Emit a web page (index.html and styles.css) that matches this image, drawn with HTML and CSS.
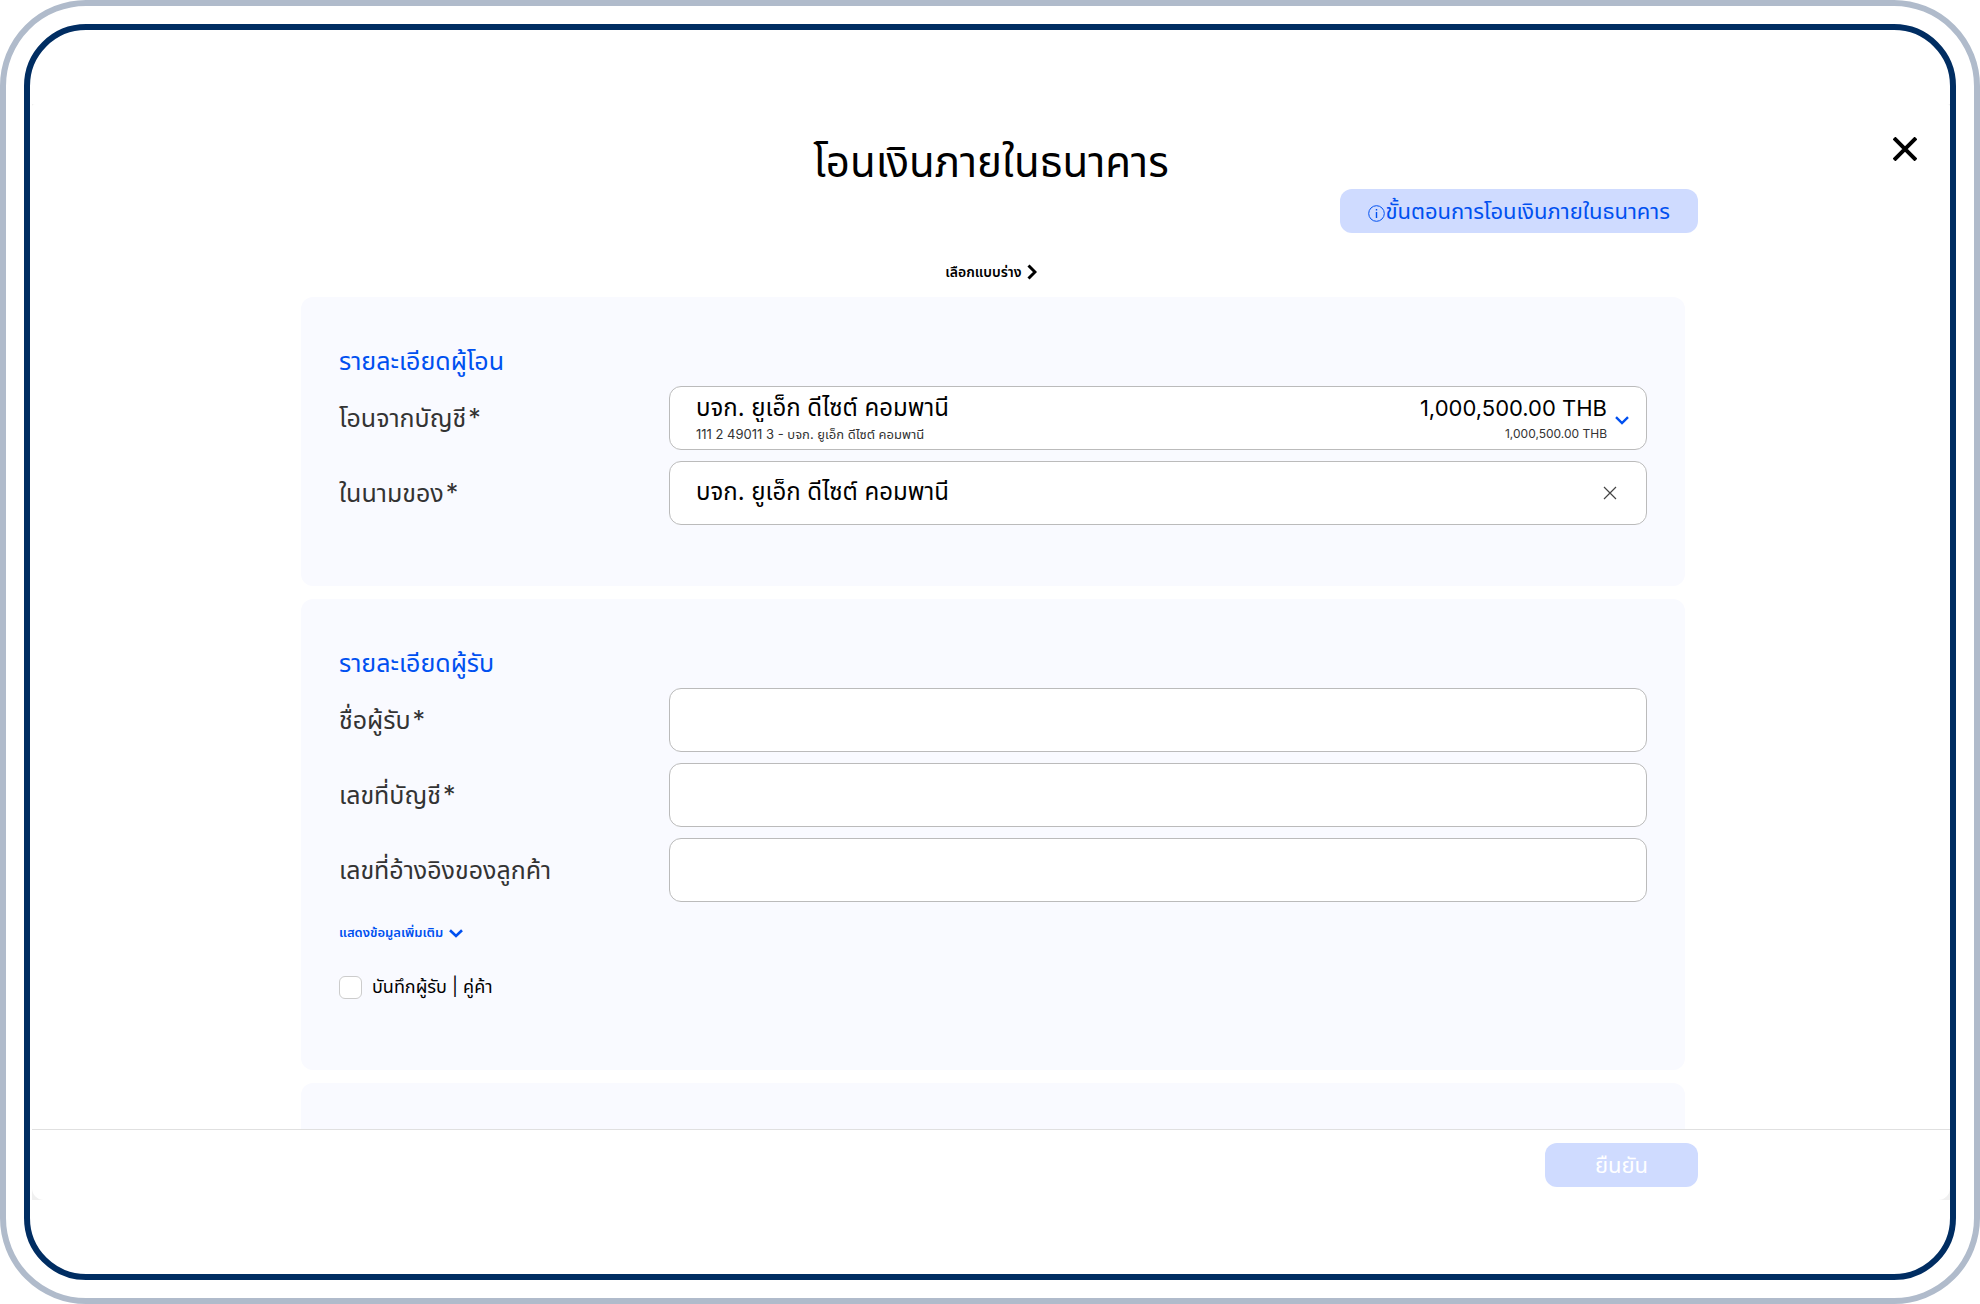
FILE: index.html
```html
<!DOCTYPE html>
<html lang="th">
  <head>
    <meta charset="utf-8">
    <title>โอนเงินภายในธนาคาร</title>
    <link rel="stylesheet" href="styles.css">
  </head>
  <body>
    <div class="frame">
      <div class="screen">
        <div class="backdrop">
          <form class="modal">
            <div class="modal-body">
              <button type="button" class="close-button" aria-label="ปิด">
                <svg width="24" height="24" viewBox="0 0 24 24"><path d="M1 1L23 23M23 1L1 23" stroke="#000" stroke-width="4"/></svg>
              </button>
              <div class="container">
                <h1 class="title">โอนเงินภายในธนาคาร</h1>
                <div class="help">
                  <button type="button" class="button help-button">
                    <svg class="info" width="17" height="17" viewBox="0 0 17 17" fill="none" stroke="#0050f0"><circle cx="8.5" cy="8.5" r="7.8"/><path d="M8.5 7V13M8.5 4V5.6" stroke-width="1.4"/></svg>ขั้นตอนการโอนเงินภายในธนาคาร
                  </button>
                </div>
                <a class="draft" href="#">เลือกแบบร่าง
                  <svg width="10" height="16" viewBox="0 0 10 16" fill="none" stroke="#000" stroke-width="3"><path d="M1.5 1.5L8 8L1.5 14.5"/></svg>
                </a>

                <section class="card">
                  <h2>รายละเอียดผู้โอน</h2>
                  <div class="row">
                    <label for="from">โอนจากบัญชี<span class="required">*</span></label>
                    <div class="field account">
                      <div class="account-name">
                        <select id="from"><option>บจก. ยูเอ็ก ดีไซต์ คอมพานี</option></select>
                        <small>111 2 49011 3 - บจก. ยูเอ็ก ดีไซต์ คอมพานี</small>
                      </div>
                      <div class="account-balance">
                        <span>1,000,500.00 THB</span>
                        <small>1,000,500.00 THB</small>
                      </div>
                      <svg class="arrow" width="14" height="9" viewBox="0 0 14 9" fill="none" stroke="#0050f0" stroke-width="2.4"><path d="M1 1.2L7 7L13 1.2"/></svg>
                    </div>
                  </div>
                  <div class="row">
                    <label for="name">ในนามของ<span class="required">*</span></label>
                    <div class="field">
                      <input type="text" id="name" value="บจก. ยูเอ็ก ดีไซต์ คอมพานี">
                      <button type="button" class="clear-button" aria-label="ล้าง">
                        <svg width="14" height="14" viewBox="0 0 14 14"><path d="M1 1L13 13M13 1L1 13" stroke="#444" stroke-width="1.2"/></svg>
                      </button>
                    </div>
                  </div>
                </section>

                <section class="card">
                  <h2>รายละเอียดผู้รับ</h2>
                  <div class="row">
                    <label for="receiver">ชื่อผู้รับ<span class="required">*</span></label>
                    <div class="field"><input type="text" id="receiver"></div>
                  </div>
                  <div class="row">
                    <label for="account">เลขที่บัญชี<span class="required">*</span></label>
                    <div class="field"><input type="text" id="account"></div>
                  </div>
                  <div class="row">
                    <label for="reference">เลขที่อ้างอิงของลูกค้า</label>
                    <div class="field"><input type="text" id="reference"></div>
                  </div>
                  <a class="more" href="#">แสดงข้อมูลเพิ่มเติม
                    <svg width="14" height="9" viewBox="0 0 14 9" fill="none" stroke="#0050f0" stroke-width="2.6"><path d="M1 1.2L7 7L13 1.2"/></svg>
                  </a>
                  <div class="save">
                    <input type="checkbox" id="save">
                    <label for="save">บันทึกผู้รับ | คู่ค้า</label>
                  </div>
                </section>

                <section class="card"></section>
              </div>
            </div>
            <div class="modal-footer">
              <div class="container">
                <button type="submit" class="button submit-button" disabled>ยืนยัน</button>
              </div>
            </div>
          </form>
        </div>
      </div>
    </div>
  </body>
</html>
```
FILE: styles.css
```css
* {
  box-sizing: border-box;
}
body {
  margin: 0;
  background-color: white;
  color: black;
  font-family: Inter, "Noto Sans Thai", sans-serif;
  font-size: 22px;
}
button, input, select {
  font: inherit;
  color: inherit;
}
button {
  border: none;
  background: none;
  padding: 0;
}
a {
  text-decoration: none;
}
.frame {
  height: 100vh;
  padding: 18px;
  border: 6px solid #b0bbcb;
  border-radius: 86px;
}
.screen {
  height: 100%;
  padding: 74px 0;
  border: 6px solid #002d62;
  border-radius: 62px;
}
.backdrop {
  height: 100%;
  padding-left: 2px;
  background-color: #f0f0f0;
  background-clip: content-box;
}
.modal {
  display: flex;
  flex-direction: column;
  height: 100%;
  background-color: white;
  border-radius: 3px 3px 12px 12px;
}
.modal-body {
  position: relative;
  flex: 1;
  min-height: 0;
  overflow: hidden;
  padding-top: 30px;
}
.container {
  width: 74%;
  max-width: 1414px;
  margin: 0 auto;
}
.close-button {
  position: absolute;
  top: 33px;
  right: 33px;
  line-height: 0;
}
.title {
  margin: 0;
  font-size: 42px;
  font-weight: 400;
  line-height: 56px;
  text-align: center;
}
.button {
  height: 44px;
  border-radius: 12px;
  background-color: #cfdbff;
  color: #0050f0;
  line-height: 44px;
}
.help {
  height: 44px;
  margin-top: -1px;
  text-align: right;
}
.help-button {
  padding: 0 28px;
}
.info {
  vertical-align: -3px;
}
.draft {
  display: flex;
  align-items: center;
  justify-content: center;
  gap: 5px;
  height: 24px;
  margin: 27px 0 13px;
  color: black;
  font-size: 14px;
  font-weight: 600;
}
.card {
  min-height: 200px;
  margin: 0 13px 13px 17px;
  padding: 48px 38px 61px;
  background-color: #f9faff;
  border-radius: 12px;
}
.card h2 {
  margin: 0 0 9px;
  color: #0050f0;
  font-size: 25px;
  font-weight: 400;
  line-height: 32px;
}
.row {
  display: flex;
  align-items: center;
  margin-bottom: 11px;
}
.row:last-child {
  margin-bottom: 0;
}
.row label {
  width: 330px;
  padding-top: 2px;
  color: #333;
  font-size: 25px;
}
.required {
  margin-left: 2px;
}
.field {
  display: flex;
  flex: 1;
  align-items: center;
  height: 64px;
  padding: 0 26px;
  background-color: white;
  border: 1px solid #bbb;
  border-radius: 12px;
}
.field input {
  flex: 1;
  min-width: 0;
  padding: 0;
  border: none;
  background: none;
  outline: none;
  font-size: 24px;
}
.clear-button {
  padding: 3px;
  line-height: 0;
}
.account {
  padding-top: 4px;
  padding-right: 17px;
}
.account-name {
  flex: 1;
}
.account-name select {
  display: block;
  height: 28px;
  padding: 0;
  border: none;
  background: none;
  appearance: none;
  font-size: 24px;
  line-height: 28px;
}
.account-balance {
  text-align: right;
}
.account-balance span {
  display: block;
  line-height: 28px;
}
.account small {
  display: block;
  color: #333;
  font-size: 13px;
  line-height: 24px;
}
.account-balance small {
  font-size: 12px;
}
.arrow {
  margin-left: 8px;
}
.more {
  display: flex;
  align-items: center;
  gap: 6px;
  height: 30px;
  margin: 16px 0 17px;
  color: #0050f0;
  font-size: 13px;
  font-weight: 600;
}
.save {
  display: flex;
  align-items: center;
  gap: 10px;
  height: 44px;
  font-size: 18px;
}
.save input {
  width: 23px;
  height: 23px;
  margin: 0;
  appearance: none;
  background-color: white;
  border: 1px solid #ccc;
  border-radius: 6px;
}
.modal-footer {
  height: 71px;
  padding-top: 13px;
  border-top: 1px solid #e0e0e0;
  text-align: right;
}
.submit-button {
  width: 153px;
  color: white;
}
```
